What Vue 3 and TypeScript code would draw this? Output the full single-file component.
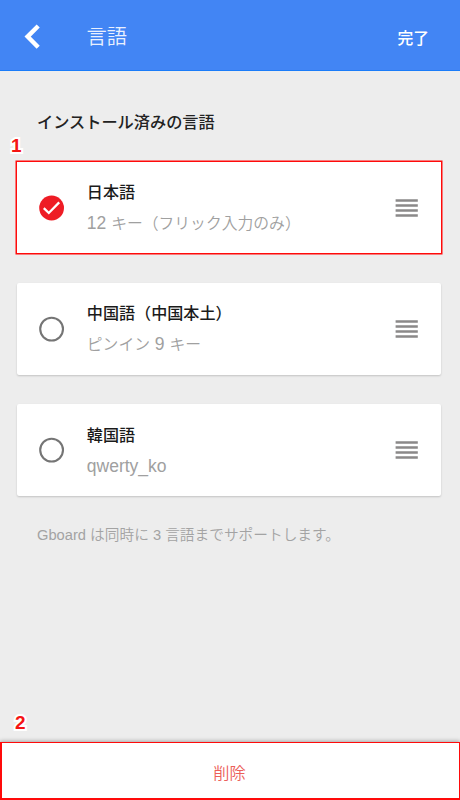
<script setup lang="ts">
import { ref } from 'vue'

interface TextRun {
  text: string
  latin: boolean
}

interface Language {
  id: string
  name: string
  layout: string
  marker?: string
}

const languages: Language[] = [
  { id: 'ja', name: '日本語', layout: '12 キー（フリック入力のみ）', marker: '1' },
  { id: 'zh', name: '中国語（中国本土）', layout: 'ピンイン 9 キー' },
  { id: 'ko', name: '韓国語', layout: 'qwerty_ko' },
]

const selected = ref<string[]>(['ja'])

function toggle(id: string) {
  selected.value = selected.value.includes(id)
    ? selected.value.filter((s) => s !== id)
    : [...selected.value, id]
}

// Latin runs are set slightly larger than the kana beside them.
function runs(text: string): TextRun[] {
  const parts = text.match(/[\x20-\x7e]+|[^\x20-\x7e]+/g) ?? []
  return parts.map((part) => ({ text: part, latin: /^[\x20-\x7e]/.test(part) }))
}
</script>

<template>
  <div class="screen">
    <header class="bar">
      <svg class="back" width="16" height="26" viewBox="0 0 16 26">
        <path d="M14.2 2 L3.6 12.6 L14.2 23.2" fill="none" stroke="#fff" stroke-width="4.4" />
      </svg>
      <h1 class="title">言語</h1>
      <span class="done">完了</span>
    </header>

    <main class="content">
      <h2 class="heading">インストール済みの言語</h2>
      <ul class="list">
        <li
          v-for="lang in languages"
          :key="lang.id"
          class="card"
          :class="{ marked: lang.marker }"
          @click="toggle(lang.id)"
        >
          <span v-if="lang.marker" class="marker card-marker">{{ lang.marker }}</span>
          <svg class="check" width="26" height="26" viewBox="0 0 26 26">
            <template v-if="selected.includes(lang.id)">
              <circle cx="12.6" cy="13" r="12.4" fill="#ee1c25" />
              <path d="M4.8 13.2 L9.8 18 L20.2 7.4" fill="none" stroke="#fff" stroke-width="2.3" />
            </template>
            <circle v-else cx="12.6" cy="13.1" r="11.4" fill="none" stroke="#757575" stroke-width="2.1" />
          </svg>
          <div class="texts">
            <div class="name">{{ lang.name }}</div>
            <div class="sub"><span v-for="(run, i) in runs(lang.layout)" :key="i" :class="{ latin: run.latin }">{{ run.text }}</span></div>
          </div>
          <svg class="grip" width="24" height="20" viewBox="0 0 24 20">
            <path d="M.6 2.5H22.8M.6 7.5H22.8M.6 12.5H22.8M.6 17.5H22.8" stroke="#8b8989" stroke-width="2.3" />
          </svg>
        </li>
      </ul>
      <p class="note">Gboard は同時に 3 言語までサポートします。</p>
    </main>

    <footer class="delete">
      <span class="marker delete-marker">2</span>
      <span>削除</span>
    </footer>
  </div>
</template>

<style>
body {
  background: #ededed;
}
</style>

<style scoped>
.screen {
  width: 460px;
  height: 800px;
  display: flex;
  flex-direction: column;
  overflow: hidden;
  background: #ededed;
  font-family: "Liberation Sans", "Noto Sans CJK JP", sans-serif;
}
.bar {
  box-sizing: border-box;
  flex: none;
  height: 71px;
  display: flex;
  align-items: center;
  padding: 3px 31px 0 23.5px;
  background: #4285f4;
  border-bottom: 1px solid #1a7cf9;
  color: #fff;
}
.back {
  flex: none;
}
.title {
  flex: 1;
  margin: 1px 0 0 47px;
  font-size: 20.3px;
  line-height: 30px;
  font-weight: 350;
  color: #e9f0fe;
}
.done {
  margin-top: 4px;
  font-size: 15.8px;
  line-height: 24px;
  font-weight: 500;
}
.content {
  flex: 1;
}
.heading {
  margin: 38.8px 0 0 37px;
  font-size: 16.2px;
  line-height: 24px;
  font-weight: 500;
  color: #222;
}
.list {
  margin: 28.2px 19px 0 17px;
  padding: 0;
  list-style: none;
  display: flex;
  flex-direction: column;
  gap: 29.8px;
}
.card {
  position: relative;
  box-sizing: border-box;
  height: 91.4px;
  display: flex;
  align-items: center;
  padding: 0 22px;
  background: #fff;
  border-radius: 2px;
  box-shadow: 0 1px 2px rgba(0, 0, 0, 0.18);
}
.card.marked {
  border-radius: 0;
  box-shadow: 0 0 0 1.5px #ff0a0a;
}
.check {
  flex: none;
}
.texts {
  flex: 1;
  margin-left: 21.8px;
  padding-top: 1px;
  white-space: nowrap;
}
.name {
  font-size: 16.1px;
  line-height: 31px;
  font-weight: 500;
  color: #1b1b1b;
}
.sub {
  height: 31px;
  font-size: 15.8px;
  line-height: 31px;
  font-weight: 350;
  color: #a0a0a0;
}
.latin {
  font-size: 17.5px;
  line-height: 1;
  white-space: pre;
}
.grip {
  flex: none;
}
.note {
  margin: 27.4px 0 0 37px;
  font-size: 14.7px;
  line-height: 24px;
  color: #a3a3a3;
  font-weight: 350;
  white-space: nowrap;
}
.delete {
  position: relative;
  box-sizing: border-box;
  flex: none;
  height: 58px;
  display: flex;
  align-items: center;
  justify-content: center;
  padding: 2px 2px 0 0;
  background: #fff;
  border: 1.5px solid #ff0a0a;
  border-left-width: 2px;
  border-bottom-width: 2px;
  box-shadow: 0 -1px 4px rgba(0, 0, 0, 0.3);
  font-size: 16.2px;
  font-weight: 350;
  color: #ec6059;
}
.marker {
  position: absolute;
  font-family: "Liberation Sans", sans-serif;
  font-size: 19px;
  line-height: 20px;
  font-weight: 700;
  color: #f51414;
  -webkit-text-stroke: 4px #fff;
  paint-order: stroke fill;
}
.card-marker {
  left: -6px;
  top: -26px;
}
.delete-marker {
  left: 13px;
  top: -30px;
}
</style>
